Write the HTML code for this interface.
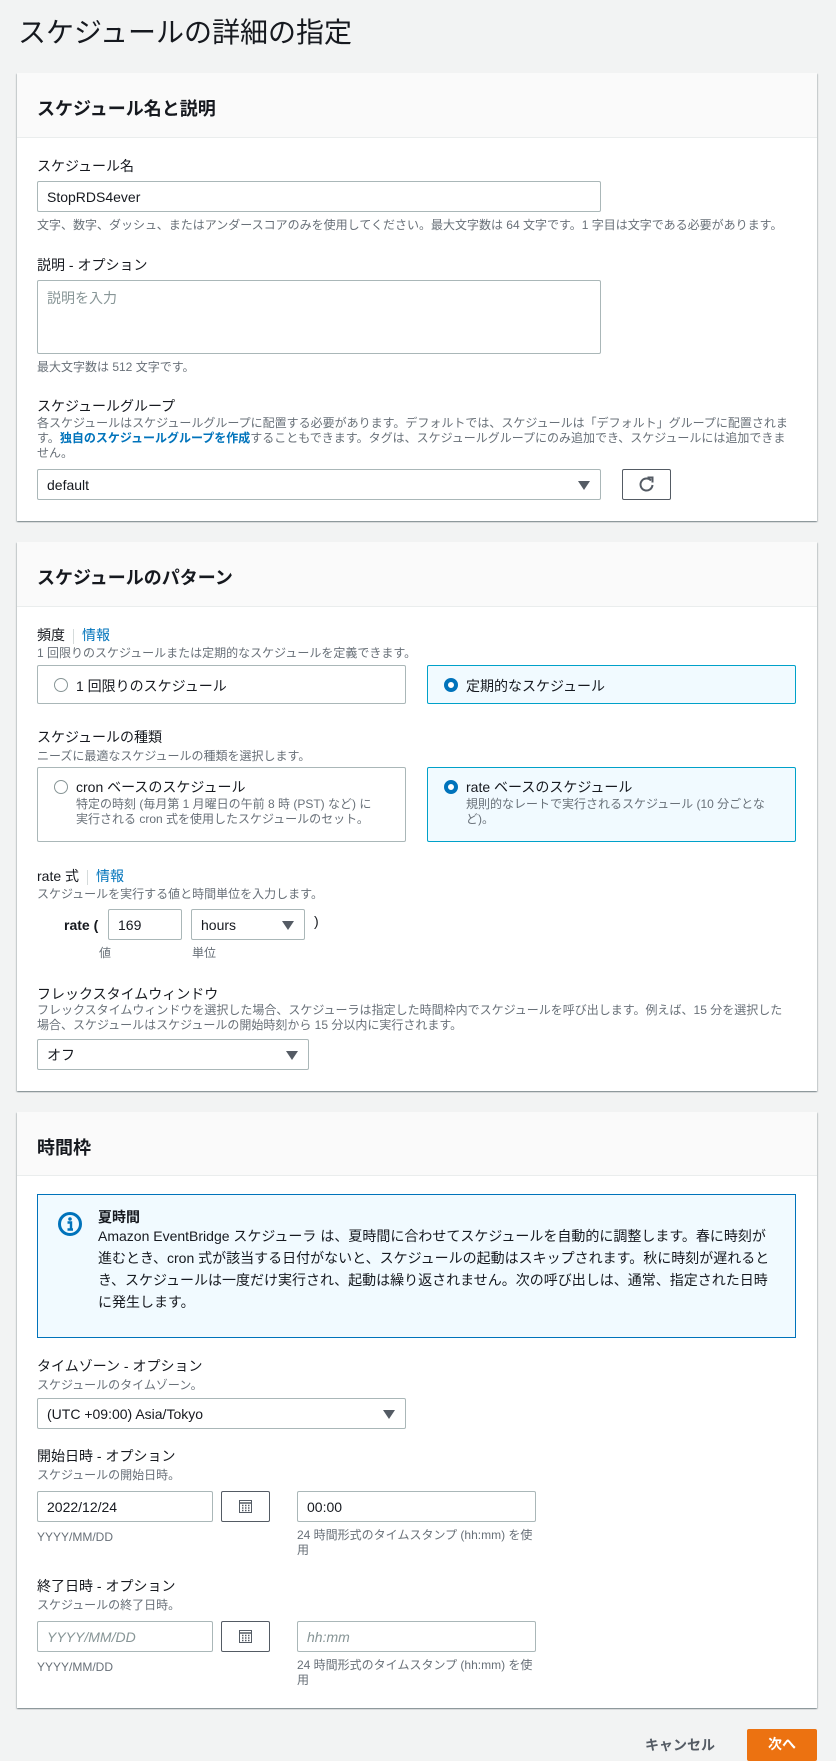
<!DOCTYPE html>
<html><head><meta charset="utf-8"><style>
*{box-sizing:border-box;margin:0;padding:0}
body{width:836px;height:1758px;background:#f2f3f3;font-family:"Liberation Sans","Noto Sans CJK JP",sans-serif;color:#16191f;position:relative;overflow:hidden;font-size:14px}
.a{position:absolute;white-space:nowrap}
.panel{position:absolute;left:17px;width:800px;background:#fff;box-shadow:0 1px 1px rgba(0,28,36,.3),1px 1px 1px rgba(0,28,36,.15),-1px 1px 1px rgba(0,28,36,.15)}
.hdr{position:absolute;left:0;top:0;width:100%;background:#fafafa;border-bottom:1px solid #eaeded}
.hdr span{position:absolute;left:20px;font-size:18px;font-weight:bold}
.lbl{font-size:14px;line-height:16px}
.hint{font-size:12px;color:#687078;line-height:15px}
.inp{position:absolute;border:1px solid #aab7b8;border-radius:2px;background:#fff;font-size:14px;padding-left:9px;display:flex;align-items:center}
.tri{position:absolute;right:10px;top:50%;margin-top:-4px;width:0;height:0;border-left:6px solid transparent;border-right:6px solid transparent;border-top:9px solid #545b64}
.tile{position:absolute;border:1px solid #aab7b8;border-radius:2px;background:#fff}
.tile.sel{border-color:#00a1c9;background:#f1faff}
.rad{position:absolute;width:14px;height:14px;border-radius:50%;border:1px solid #879596;background:#fff}
.rad.on{border:4px solid #0073bb}
.link{color:#0073bb}
.sep{display:inline-block;width:1px;height:15px;background:#d5dbdb;vertical-align:middle;margin:0 8px}
.btn{position:absolute;border:1px solid #545b64;border-radius:2px;background:#fff}
</style></head><body>
<div class="a" style="left:18px;top:16px;font-size:28px;line-height:34px">スケジュールの詳細の指定</div>

<div class="panel" style="top:73px;height:448px">
 <div class="hdr" style="height:65px"><span style="top:22px">スケジュール名と説明</span></div>
 <div class="a lbl" style="left:20px;top:85px">スケジュール名</div>
 <div class="inp" style="left:20px;top:108px;width:564px;height:31px">StopRDS4ever</div>
 <div class="a hint" style="left:20px;top:145px">文字、数字、ダッシュ、またはアンダースコアのみを使用してください。最大文字数は 64 文字です。1 字目は文字である必要があります。</div>
 <div class="a lbl" style="left:20px;top:184px">説明 - オプション</div>
 <div class="inp" style="left:20px;top:207px;width:564px;height:74px;align-items:flex-start;padding-top:7px;color:#879596">説明を入力</div>
 <div class="a hint" style="left:20px;top:287px">最大文字数は 512 文字です。</div>
 <div class="a lbl" style="left:20px;top:325px">スケジュールグループ</div>
 <div class="a hint" style="left:20px;top:343px;white-space:normal;width:758px">各スケジュールはスケジュールグループに配置する必要があります。デフォルトでは、スケジュールは「デフォルト」グループに配置されます。<b class="link">独自のスケジュールグループを作成</b>することもできます。タグは、スケジュールグループにのみ追加でき、スケジュールには追加できません。</div>
 <div class="inp" style="left:20px;top:396px;width:564px;height:31px">default<i class="tri"></i></div>
 <div class="btn" style="left:605px;top:396px;width:49px;height:31px"><svg width="47" height="29" viewBox="0 0 47 29"><path d="M28 10.5A6 6 0 1 0 29.5 15" fill="none" stroke="#545b64" stroke-width="2"/><path d="M24.5 7.5h5v5" fill="none" stroke="#545b64" stroke-width="2"/></svg></div>
</div>

<div class="panel" style="top:542px;height:549px">
 <div class="hdr" style="height:65px"><span style="top:22px">スケジュールのパターン</span></div>
 <div class="a lbl" style="left:20px;top:85px">頻度<span class="sep"></span><span class="link">情報</span></div>
 <div class="a hint" style="left:20px;top:104px">1 回限りのスケジュールまたは定期的なスケジュールを定義できます。</div>
 <div class="tile" style="left:20px;top:123px;width:369px;height:39px"><i class="rad" style="left:16px;top:12px"></i><span class="a" style="left:38px;top:10px">1 回限りのスケジュール</span></div>
 <div class="tile sel" style="left:410px;top:123px;width:369px;height:39px"><i class="rad on" style="left:16px;top:12px"></i><span class="a" style="left:38px;top:10px">定期的なスケジュール</span></div>
 <div class="a lbl" style="left:20px;top:187px">スケジュールの種類</div>
 <div class="a hint" style="left:20px;top:207px">ニーズに最適なスケジュールの種類を選択します。</div>
 <div class="tile" style="left:20px;top:225px;width:369px;height:75px"><i class="rad" style="left:16px;top:12px"></i><span class="a" style="left:38px;top:9px">cron ベースのスケジュール</span><span class="a hint" style="left:38px;top:29px;white-space:normal;width:305px">特定の時刻 (毎月第 1 月曜日の午前 8 時 (PST) など) に実行される cron 式を使用したスケジュールのセット。</span></div>
 <div class="tile sel" style="left:410px;top:225px;width:369px;height:75px"><i class="rad on" style="left:16px;top:12px"></i><span class="a" style="left:38px;top:9px">rate ベースのスケジュール</span><span class="a hint" style="left:38px;top:29px;white-space:normal;width:310px">規則的なレートで実行されるスケジュール (10 分ごとなど)。</span></div>
 <div class="a lbl" style="left:20px;top:326px">rate 式<span class="sep"></span><span class="link">情報</span></div>
 <div class="a hint" style="left:20px;top:345px">スケジュールを実行する値と時間単位を入力します。</div>
 <div class="a" style="left:47px;top:375px;font-weight:bold">rate (</div>
 <div class="inp" style="left:91px;top:367px;width:74px;height:31px">169</div>
 <div class="inp" style="left:174px;top:367px;width:114px;height:31px">hours<i class="tri"></i></div>
 <div class="a" style="left:297px;top:371px">)</div>
 <div class="a hint" style="left:82px;top:404px">値</div>
 <div class="a hint" style="left:175px;top:404px">単位</div>
 <div class="a lbl" style="left:20px;top:444px">フレックスタイムウィンドウ</div>
 <div class="a hint" style="left:20px;top:461px;white-space:normal;width:752px">フレックスタイムウィンドウを選択した場合、スケジューラは指定した時間枠内でスケジュールを呼び出します。例えば、15 分を選択した場合、スケジュールはスケジュールの開始時刻から 15 分以内に実行されます。</div>
 <div class="inp" style="left:20px;top:497px;width:272px;height:31px">オフ<i class="tri"></i></div>
</div>

<div class="panel" style="top:1112px;height:596px">
 <div class="hdr" style="height:64px"><span style="top:22px">時間枠</span></div>
 <div class="a" style="left:20px;top:82px;width:759px;height:144px;border:1px solid #0073bb;background:#f1faff"></div>
 <svg class="a" style="left:40px;top:99px" width="26" height="26" viewBox="0 0 26 26"><circle cx="13" cy="13" r="10.5" fill="none" stroke="#0073bb" stroke-width="3"/><circle cx="13" cy="8" r="1.8" fill="#0073bb"/><path d="M10.5 11.5h3.5v6.5M10.5 18.5h5.5" stroke="#0073bb" stroke-width="2.4" fill="none"/></svg>
 <div class="a" style="left:81px;top:95px;font-weight:bold">夏時間</div>
 <div class="a" style="left:81px;top:113px;white-space:normal;width:675px;line-height:22px">Amazon EventBridge スケジューラ は、夏時間に合わせてスケジュールを自動的に調整します。春に時刻が進むとき、cron 式が該当する日付がないと、スケジュールの起動はスキップされます。秋に時刻が遅れるとき、スケジュールは一度だけ実行され、起動は繰り返されません。次の呼び出しは、通常、指定された日時に発生します。</div>
 <div class="a lbl" style="left:20px;top:246px">タイムゾーン - オプション</div>
 <div class="a hint" style="left:20px;top:266px">スケジュールのタイムゾーン。</div>
 <div class="inp" style="left:20px;top:286px;width:369px;height:31px">(UTC +09:00) Asia/Tokyo<i class="tri"></i></div>
 <div class="a lbl" style="left:20px;top:336px">開始日時 - オプション</div>
 <div class="a hint" style="left:20px;top:356px">スケジュールの開始日時。</div>
 <div class="inp" style="left:20px;top:379px;width:176px;height:31px">2022/12/24</div>
 <div class="btn" style="left:204px;top:379px;width:49px;height:31px"><svg width="47" height="29" viewBox="0 0 47 29"><rect x="17.5" y="8.5" width="12" height="12" fill="none" stroke="#545b64"/><path d="M17.5 11h12M20 13.5h1.5M23 13.5h1.5M26 13.5h1.5M20 16h1.5M23 16h1.5M26 16h1.5M20 18.5h1.5M23 18.5h1.5M26 18.5h1.5" stroke="#545b64" stroke-width="1.5"/></svg></div>
 <div class="inp" style="left:280px;top:379px;width:239px;height:31px">00:00</div>
 <div class="a hint" style="left:20px;top:418px">YYYY/MM/DD</div>
 <div class="a hint" style="left:280px;top:416px;white-space:normal;width:240px">24 時間形式のタイムスタンプ (hh:mm) を使用</div>
 <div class="a lbl" style="left:20px;top:466px">終了日時 - オプション</div>
 <div class="a hint" style="left:20px;top:486px">スケジュールの終了日時。</div>
 <div class="inp" style="left:20px;top:509px;width:176px;height:31px;color:#879596;font-style:italic">YYYY/MM/DD</div>
 <div class="btn" style="left:204px;top:509px;width:49px;height:31px"><svg width="47" height="29" viewBox="0 0 47 29"><rect x="17.5" y="8.5" width="12" height="12" fill="none" stroke="#545b64"/><path d="M17.5 11h12M20 13.5h1.5M23 13.5h1.5M26 13.5h1.5M20 16h1.5M23 16h1.5M26 16h1.5M20 18.5h1.5M23 18.5h1.5M26 18.5h1.5" stroke="#545b64" stroke-width="1.5"/></svg></div>
 <div class="inp" style="left:280px;top:509px;width:239px;height:31px;color:#879596;font-style:italic">hh:mm</div>
 <div class="a hint" style="left:20px;top:548px">YYYY/MM/DD</div>
 <div class="a hint" style="left:280px;top:546px;white-space:normal;width:240px">24 時間形式のタイムスタンプ (hh:mm) を使用</div>
</div>

<div class="a" style="left:645px;top:1735px;font-weight:bold;color:#545b64">キャンセル</div>
<div class="a" style="left:747px;top:1729px;width:70px;height:32px;background:#ec7211;border-radius:2px;color:#fff;font-weight:bold;text-align:center;line-height:30px">次へ</div>
</body></html>
